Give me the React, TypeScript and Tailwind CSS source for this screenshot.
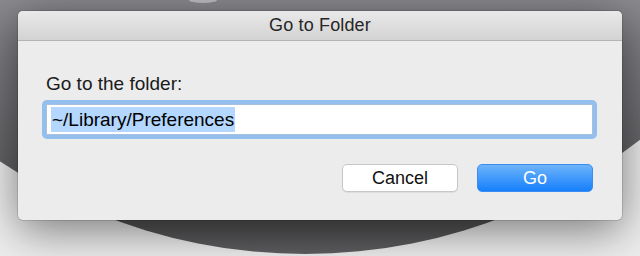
export default function App() {
  return (
    <div className="relative w-[640px] h-[256px] overflow-hidden bg-[#eeeeee] pt-[11px] pl-[18px] font-['Liberation_Sans',Arial,sans-serif]">
      <div className="absolute left-[-243px] top-[-842px] w-[1096px] h-[1096px] rounded-full bg-[linear-gradient(to_bottom,#8b8a8f_76.8%,#6c6b6f_87.8%,#535355_97.4%,#5f5f61_100%)]" />
      <div className="absolute left-[189px] top-[-3px] w-[28px] h-[6px] rounded-[50%] bg-[#bebdc1] blur-[0.5px]" />
      <div className="relative w-[604px] h-[209px] rounded-[5px] overflow-hidden bg-[#ececec] shadow-[0_0_0_1px_rgba(0,0,0,0.12),0_10px_45px_rgba(0,0,0,0.5)] flex flex-col">
        <div className="h-[30px] shrink-0 border-b border-[#b3b3b3] bg-[linear-gradient(to_bottom,#e9e9e9,#d3d3d3)] flex items-center justify-center text-[18px] tracking-[0.15px] text-[#262626]">
          Go to Folder
        </div>
        <div className="flex flex-col pl-[24px]">
          <div className="ml-[4px] mt-[32px] text-[19px] leading-[21px] text-[#1a1a1a]">Go to the folder:</div>
          <div className="mt-[6px] w-[555px] h-[39px] rounded-[5px] bg-[#93bfef] p-[4px]">
            <div className="h-full bg-white border border-[#a9c0dc] flex items-center pl-[4px]">
              <span className="bg-[#b3d7ff] text-[19px] leading-[25px] text-black px-[1px]">~/Library/Preferences</span>
            </div>
          </div>
          <div className="mt-[25px] flex justify-end gap-[19px] pr-[29px]">
            <button className="w-[116px] h-[28px] rounded-[5px] bg-white border border-[#c6c6c6] shadow-[0_1px_0_rgba(0,0,0,0.06)] text-[18px] leading-none text-[#111111] flex items-center justify-center">
              Cancel
            </button>
            <button className="w-[116px] h-[28px] rounded-[5px] bg-[linear-gradient(to_bottom,#6db4fb,#167ffb)] border border-[#3a8cf3] text-[18px] leading-none text-white flex items-center justify-center">
              Go
            </button>
          </div>
        </div>
      </div>
    </div>
  );
}
